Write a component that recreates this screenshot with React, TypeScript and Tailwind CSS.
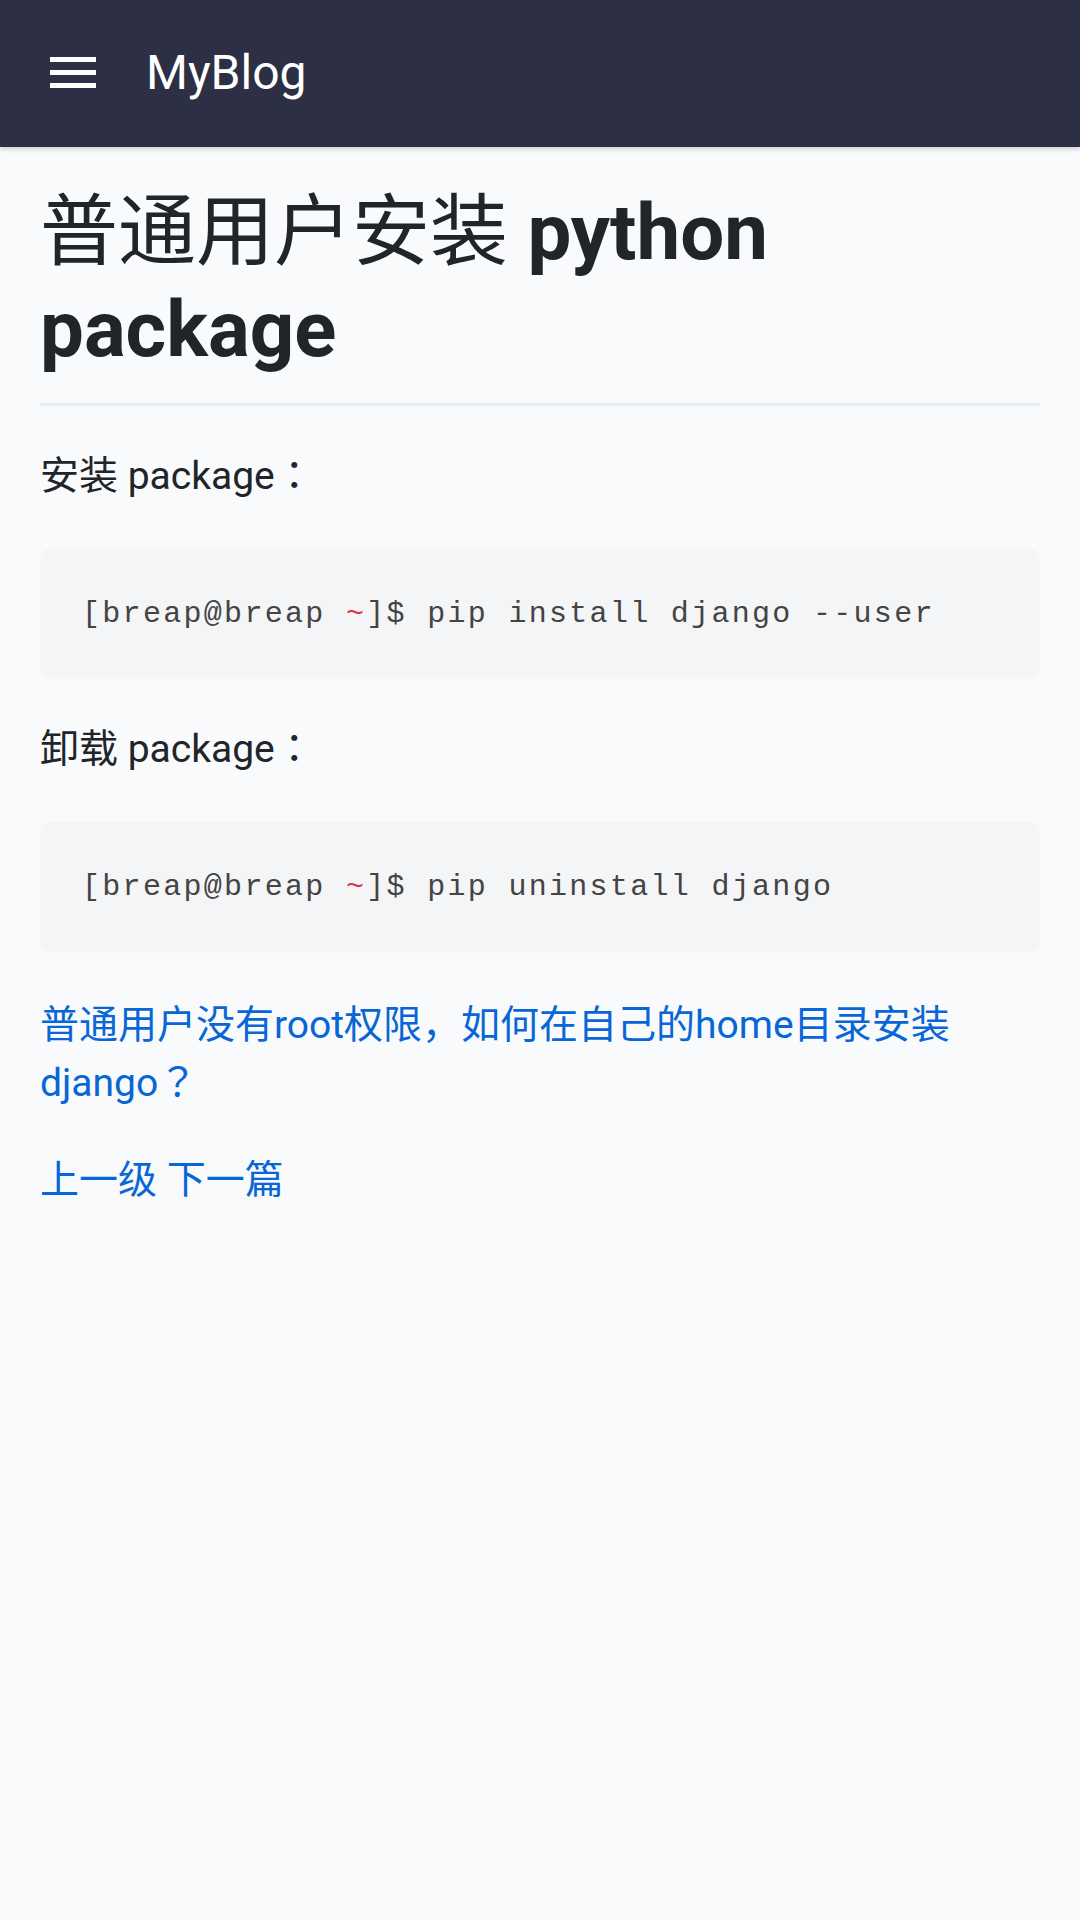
export default function App() {
  return (
    <div className="min-h-[1920px] bg-[#f9fafc] font-['Roboto','Noto_Sans_CJK_SC',sans-serif] text-[#212529]">
      <header className="h-[147px] bg-[#2d2f45] flex items-center shadow-[0_2px_5px_rgba(0,0,0,0.18)]">
        <div className="ml-[50px] w-[46px] flex flex-col gap-[8px] -mt-[2px]">
          <div className="h-[5px] bg-white"></div>
          <div className="h-[5px] bg-white"></div>
          <div className="h-[5px] bg-white"></div>
        </div>
        <div className="ml-[50px] text-[48px] leading-none text-white -mt-[2px]">MyBlog</div>
      </header>

      <main className="px-[40px]">
        <h1 className="mt-[37px] pb-[25px] border-b-[3px] border-[#e9ecef] text-[78px] leading-[97px] font-bold">
          <span className="font-normal">普通用户安装</span> python package
        </h1>

        <p className="mt-[41px] text-[39px] leading-[58px]">
          安装 package<span className="leading-[0] font-['Noto_Sans_CJK_TC',sans-serif]">：</span>
        </p>
        <pre className="mt-[44px] bg-[#f4f5f7] rounded-[10px] px-[42px] py-[42px] font-['Liberation_Mono',monospace] text-[30px] tracking-[2.3px] leading-[46px] text-[#444]">
          [breap@breap <span className="text-[#dc3545]">~</span>]$ pip install django --user
        </pre>

        <p className="mt-[41px] text-[39px] leading-[58px]">
          卸载 package<span className="leading-[0] font-['Noto_Sans_CJK_TC',sans-serif]">：</span>
        </p>
        <pre className="mt-[44px] bg-[#f4f5f7] rounded-[10px] px-[42px] py-[42px] font-['Liberation_Mono',monospace] text-[30px] tracking-[2.3px] leading-[46px] text-[#444]">
          [breap@breap <span className="text-[#dc3545]">~</span>]$ pip uninstall django
        </pre>

        <p className="mt-[44px] text-[39px] leading-[58px] text-[#0866d6] pr-[80px]">
          <a href="#">
            普通用户没有root权限，如何在自己的home目录安装django<span className="leading-[0] font-['Noto_Sans_CJK_TC',sans-serif]">？</span>
          </a>
        </p>

        <p className="mt-[39px] text-[39px] leading-[58px] text-[#0866d6]">
          <a href="#">上一级</a> <a href="#">下一篇</a>
        </p>
      </main>
    </div>
  );
}
